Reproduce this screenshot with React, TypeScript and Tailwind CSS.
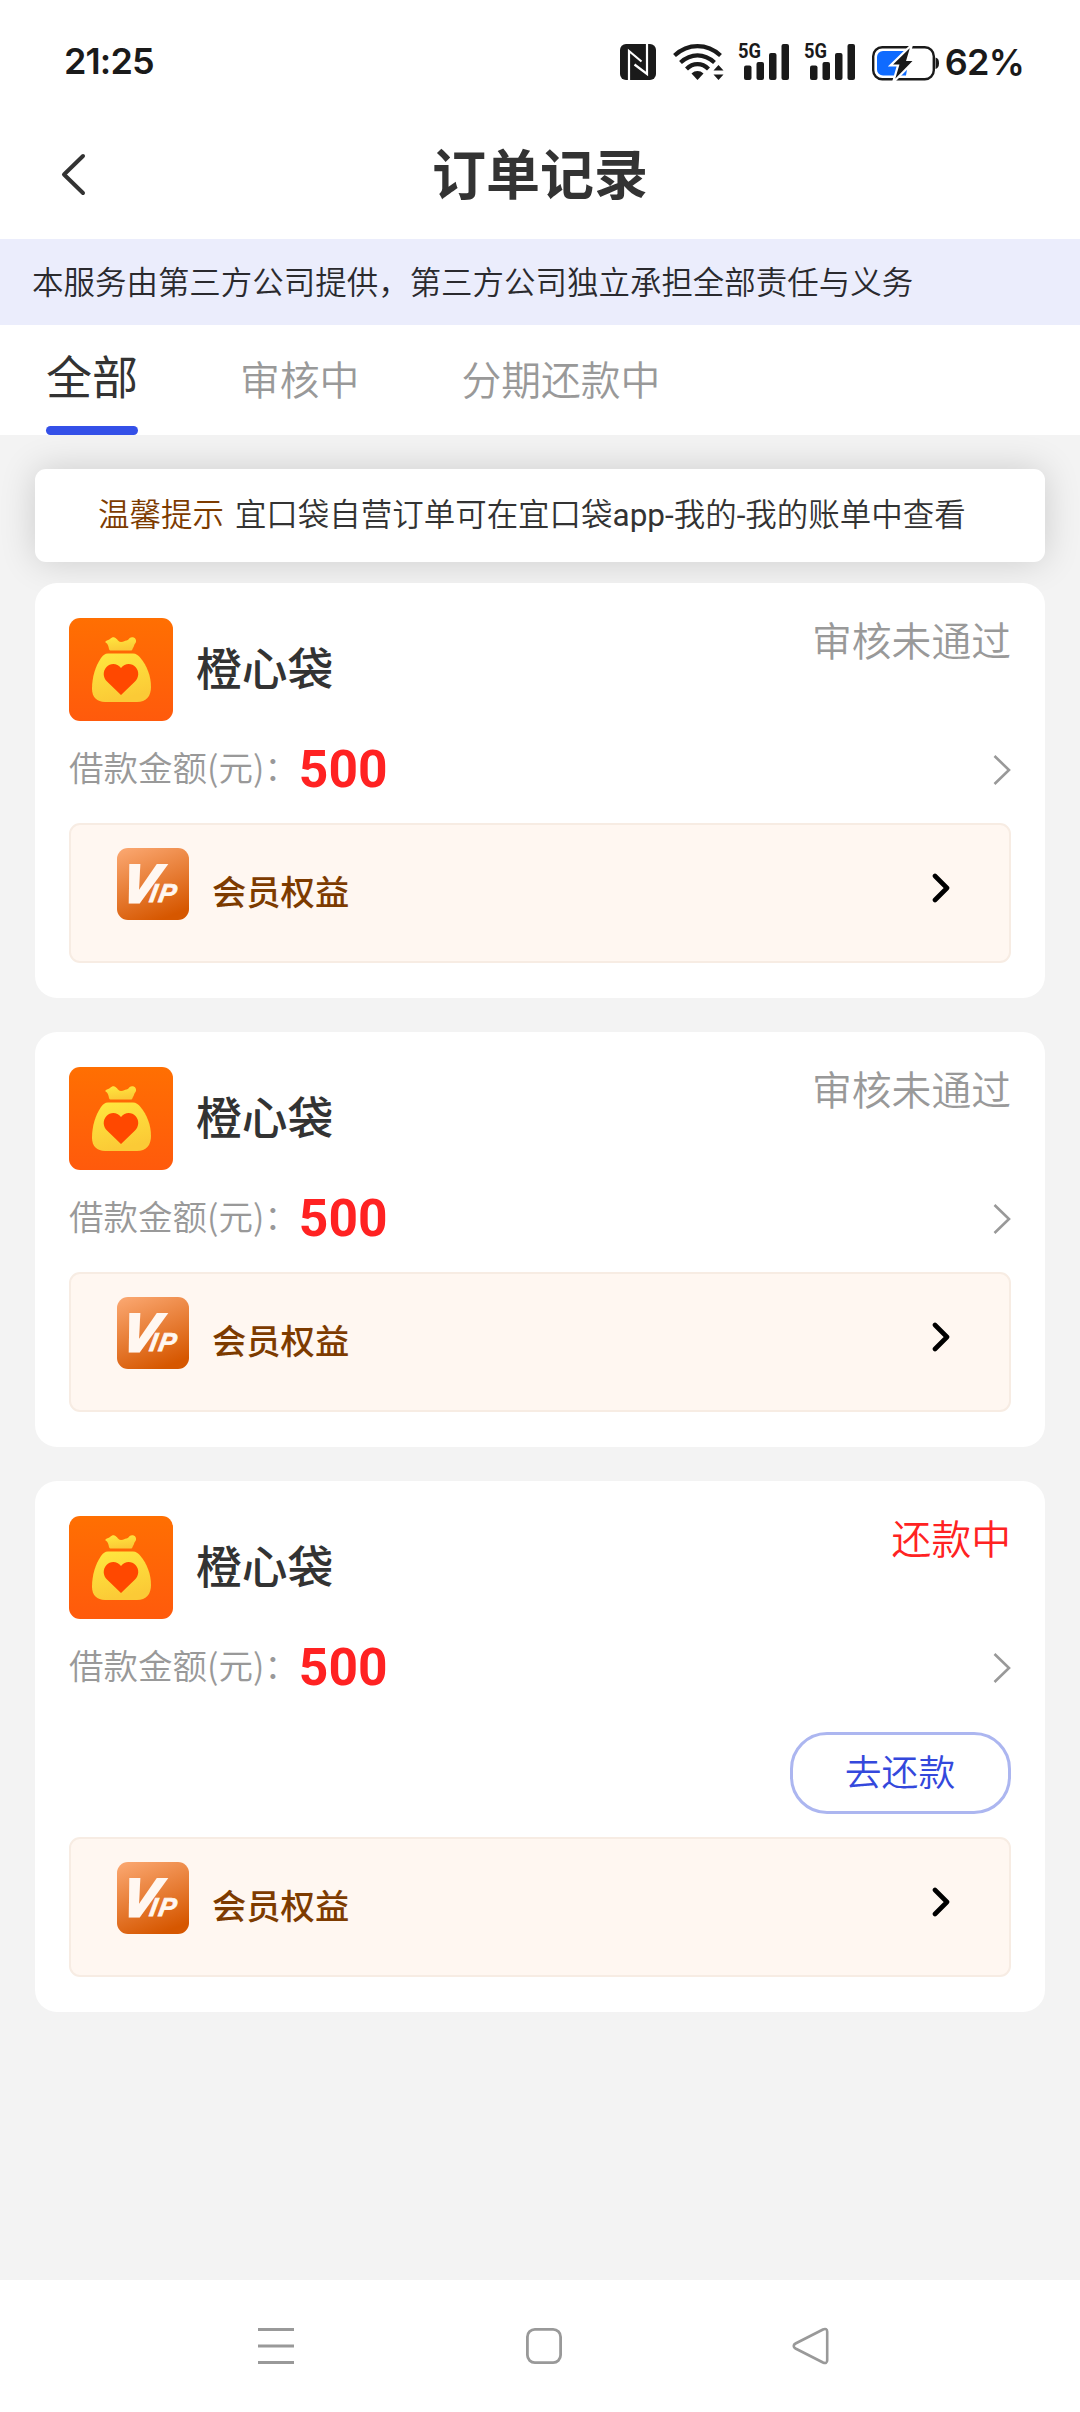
import React, { FC } from "react";

interface Order {
  id: number;
  name: string;
  amount: number;
  status: string;
  repaying?: boolean;
}

const TABS = ["全部", "审核中", "分期还款中"];

const ORDERS: Order[] = [
  { id: 1, name: "橙心袋", amount: 500, status: "审核未通过" },
  { id: 2, name: "橙心袋", amount: 500, status: "审核未通过" },
  { id: 3, name: "橙心袋", amount: 500, status: "还款中", repaying: true },
];

const SignalIcon: FC<{ className?: string }> = ({ className = "" }) => (
  <svg className={className} width="52" height="40" viewBox="0 0 52 40" fill="#1a1a1a">
    <text
      x="0"
      y="18"
      fontSize="21"
      fontWeight="700"
      fontFamily="Roboto, sans-serif"
      textLength="23"
      lengthAdjust="spacingAndGlyphs"
    >
      5G
    </text>
    <rect x="6" y="25.5" width="7.5" height="14.5" rx="2" />
    <rect x="18.5" y="22" width="7.5" height="18" rx="2" />
    <rect x="31" y="13" width="7.5" height="27" rx="2" />
    <rect x="43.5" y="4" width="7.5" height="36" rx="2" />
  </svg>
);

const StatusBar = () => (
  <div className="flex h-[122px] items-start justify-between pl-[64px] pr-[56px] pt-[40px] text-[#1a1a1a]">
    <span className="-mt-px font-['Inter',sans-serif] text-[36px] font-semibold leading-[44px] tracking-[-0.9px]">
      21:25
    </span>
    <div className="flex items-start">
      {/* nfc */}
      <svg className="mt-1" width="36" height="36" viewBox="0 0 36 36" fill="none">
        <rect width="36" height="36" rx="6" fill="#1a1a1a" />
        <path d="M9 36V7l12.500 10.500M27 0v30L14.500 20.500" stroke="#fff" strokeWidth="2.200" />
      </svg>
      {/* wifi */}
      <svg className="ml-[17px] mt-[3px]" width="52" height="38" viewBox="0 0 52 38" fill="none">
        <g stroke="#1a1a1a" strokeWidth="4.200">
          <path d="M1.500 12.500C15 0 34 0 47.500 12.500" />
          <path d="M7.500 19.500C18 10 31 10 41.500 19.500" />
          <path d="M13.500 26C20 19.500 29 19.500 35.500 26" />
        </g>
        <path d="M24.500 37l-6-6.500c3.500-3.300 8.500-3.300 12 0z" fill="#1a1a1a" />
        <path d="M40.500 27.500l5-5.500 5 5.500zM40.500 31.500l5 5.500 5-5.500z" fill="#1a1a1a" />
      </svg>
      <SignalIcon className="ml-[13px]" />
      <SignalIcon className="ml-[14px]" />
      {/* battery */}
      <svg className="ml-[16px] mt-[3px]" width="68" height="40" viewBox="0 0 68 40">
        <rect x="1.200" y="4.200" width="60.600" height="32" rx="9" fill="none" stroke="#1a1a1a" strokeWidth="2.400" />
        <path d="M63.500 14.500c2.500.5 3.500 2.500 3.500 5.700s-1 5.200-3.500 5.700z" fill="#1a1a1a" />
        <path d="M5 14a6 6 0 0 1 6-6h27L34 32.500H11a6 6 0 0 1-6-6z" fill="#0f6bff" />
        <path
          d="M40 1.500L18.500 22.500H26L21 39.500 43 17H35.500z"
          fill="#1a1a1a"
          stroke="#fff"
          strokeWidth="2.200"
        />
      </svg>
      <span className="ml-[5px] font-['Inter',sans-serif] text-[36px] font-semibold leading-[44px] tracking-[-0.8px]">
        62%
      </span>
    </div>
  </div>
);

const BagLogo = () => (
  <svg width="104" height="103" viewBox="0 0 104 103">
    <defs>
      <linearGradient id="bagBg" x1="0" y1="0" x2="0" y2="1">
        <stop offset="0" stopColor="#ff6f02" />
        <stop offset="1" stopColor="#ff5a0c" />
      </linearGradient>
      <linearGradient id="bagFill" x1="0" y1="0" x2="0.300" y2="1">
        <stop offset="0" stopColor="#ffe83f" />
        <stop offset="1" stopColor="#fbca36" />
      </linearGradient>
    </defs>
    <rect width="104" height="103" rx="11" fill="url(#bagBg)" />
    <path
      d="M36.500 23.500c1-1.500 3-1.200 4.500-2.500s3-2 4.500-1.500c3 1 3.500 4.500 6.500 4.500s3.500-1.500 5.500-1.500 2.500-3 5.500-3.200c3-.1 4.500 2.200 4 4.700-.5 1.500-2 2.500-2 4L63.500 31c-.3 1-.8 1.500-2 1.500H42c-1 0-1.700-.5-2-1.500-.5-3-1.200-5-3-6.200-.7-.4-.8-.9-.5-1.300z"
      fill="url(#bagFill)"
    />
    <path
      d="M39 35.500h25c3 0 5 1.500 7.500 4.500C78 48 82 58 82 69c0 9.500-5 15-14 15H36c-8 0-13-5-13-13 0-12 3.500-23 9-31 2.200-3 4-4.500 7-4.500z"
      fill="url(#bagFill)"
    />
    <path
      d="M52 50c4-5.500 11-5 14.500-1 4 4.500 3.500 10.500-.5 14.500L52 77 38 63.500c-4-4-4.500-10-.5-14.500 3.500-4 10.500-4.500 14.500 1z"
      fill="#ff4800"
    />
  </svg>
);

const VipBadge = () => (
  <svg width="72" height="72" viewBox="0 0 72 72">
    <defs>
      <linearGradient id="vipBg" x1="0.2" y1="0" x2="0.6" y2="1">
        <stop offset="0" stopColor="#f9a46c" />
        <stop offset="1" stopColor="#d65700" />
      </linearGradient>
    </defs>
    <rect width="72" height="72" rx="11" fill="url(#vipBg)" />
    <text
      transform="translate(0 54) skewX(-10)"
      fill="#fff7f1"
      stroke="#fff7f1"
      fontFamily="'Liberation Sans', Arial, sans-serif"
      fontWeight="700"
      fontStyle="italic"
    >
      <tspan x="3" fontSize="53" strokeWidth="3">V</tspan>
      <tspan x="31.500" fontSize="26" strokeWidth="0.800">I</tspan>
      <tspan x="40.500" fontSize="26" strokeWidth="0.800">P</tspan>
    </text>
  </svg>
);

const OrderCard: FC<{ data: Order }> = ({ data }) => {
  const { name, amount, status, repaying } = data;

  return (
    <div className="rounded-[22px] bg-white px-[34px] py-[35px]">
      <div className="flex h-[103px] items-start">
        <BagLogo />
        <h3 className="ml-[23px] mt-[15px] text-[45.800px] font-medium leading-[66px] text-[#333]">{name}</h3>
        <span
          className={`-mt-[2px] ml-auto text-[39.800px] font-[350] leading-[46px] ${
            repaying ? "text-[#f22]" : "text-[#999]"
          }`}
        >
          {status}
        </span>
      </div>

      <div className="flex h-[102px] items-center pb-[4px] text-[#999]">
        <span className="mb-[6px] text-[34.500px] font-[350]">借款金额(元)：</span>
        <span className="font-['Roboto',sans-serif] text-[51.500px] font-bold text-[#f22]">{amount}</span>
        <svg className="ml-auto" width="18" height="32" viewBox="0 0 18 32" fill="none">
          <path d="M1.500 2L16 16 1.500 30" stroke="#999" strokeWidth="2.600" />
        </svg>
      </div>

      {repaying && (
        <div className="flex justify-end pb-[23px] pt-[11px]">
          <button
            type="button"
            className="h-[82px] w-[221px] rounded-[37px] border-[3px] border-[#acb6f0] pb-[4px] pr-px text-[36.800px] font-[350] text-[#3448dc]"
          >
            去还款
          </button>
        </div>
      )}

      <div className="flex h-[140px] items-start rounded-[11px] border-2 border-[#f7ece3] bg-[#fff7f1] pl-[46px] pr-[59px] pt-[23px]">
        <VipBadge />
        <span className="ml-[23px] mt-[17px] text-[34.300px] font-medium leading-[50px] text-[#7d3b00]">会员权益</span>
        <svg className="ml-auto mt-[25px]" width="18" height="30" viewBox="0 0 18 30" fill="none">
          <path d="M3 3l12 12L3 27" stroke="#000" strokeWidth="4.600" strokeLinecap="round" strokeLinejoin="round" />
        </svg>
      </div>
    </div>
  );
};

const NavBar = () => (
  <div className="flex h-[132px] items-start justify-between bg-white pl-[257px] pr-[250px] pt-[47px]">
    <svg width="38" height="38" viewBox="0 0 38 38" stroke="#999" strokeWidth="3">
      <path d="M1 2.500h36M1 19h36M1 35.500h36" />
    </svg>
    <svg width="38" height="38" viewBox="0 0 38 38" fill="none" stroke="#999" strokeWidth="2.800">
      <rect x="2.400" y="2.400" width="33.200" height="33.200" rx="7.500" />
    </svg>
    <svg width="38" height="38" viewBox="0 0 38 38" fill="none" stroke="#999" strokeWidth="2.600">
      <path d="M3.500 16.500L31 2.500c2.500-1.200 4.200-.3 4.200 2.200v28.600c0 2.500-1.700 3.400-4.200 2.200L3.500 21.500c-2.400-1.300-2.400-3.700 0-5z" />
    </svg>
  </div>
);

export default function App() {
  return (
    <div className="flex h-[2412px] w-[1080px] flex-col overflow-hidden bg-[#f3f3f3] font-['Noto_Sans_CJK_SC',sans-serif]">
      <header className="bg-white">
        <StatusBar />
        <div className="flex h-[117px] items-start">
          <svg className="ml-[60px] mt-[31px]" width="28" height="44" viewBox="0 0 28 44" fill="none">
            <path d="M23 3L4 21.500 23 40" stroke="#333" strokeWidth="4" strokeLinecap="round" strokeLinejoin="round" />
          </svg>
          <h1 className="mr-[88px] mt-[10px] flex-1 text-center text-[54px] font-bold leading-[80px] text-[#333]">
            订单记录
          </h1>
        </div>
      </header>

      <p className="h-[86px] bg-[#ebedfc] pl-[32px] text-[31.480px] font-[350] leading-[83px] text-[#2a2a2e]">
        本服务由第三方公司提供，第三方公司独立承担全部责任与义务
      </p>

      <nav className="flex h-[110px] gap-[102px] bg-white pl-[46px]">
        {TABS.map((tab, i) => (
          <div key={tab} className="flex flex-col justify-between">
            <span
              className={
                i === 0
                  ? "text-[46px] font-normal leading-[99px] text-[#333]"
                  : "text-[39.800px] font-[350] leading-[105px] text-[#999]"
              }
            >
              {tab}
            </span>
            {i === 0 && <div className="h-[9px] shrink-0 rounded-full bg-[#3450e8]" />}
          </div>
        ))}
      </nav>

      <main className="flex-1 px-[35px] pt-[34px]">
        <div className="h-[93px] rounded-[11px] bg-white pl-[63px] text-[31.480px] font-[350] leading-[87px] text-[#333] shadow-[0_0_36px_rgba(0,0,0,0.16)]">
          <span className="mr-[11px] text-[#7d3b00]">温馨提示</span>
          <span>
            宜口袋自营订单可在宜口袋<span className="font-['Roboto',sans-serif] font-normal">app-</span>我的
            <span className="font-['Roboto',sans-serif] font-normal">-</span>我的账单中查看
          </span>
        </div>

        <div className="relative mt-[21px] flex flex-col gap-[34px]">
          {ORDERS.map((order) => (
            <OrderCard key={order.id} data={order} />
          ))}
        </div>
      </main>

      <NavBar />
    </div>
  );
}
